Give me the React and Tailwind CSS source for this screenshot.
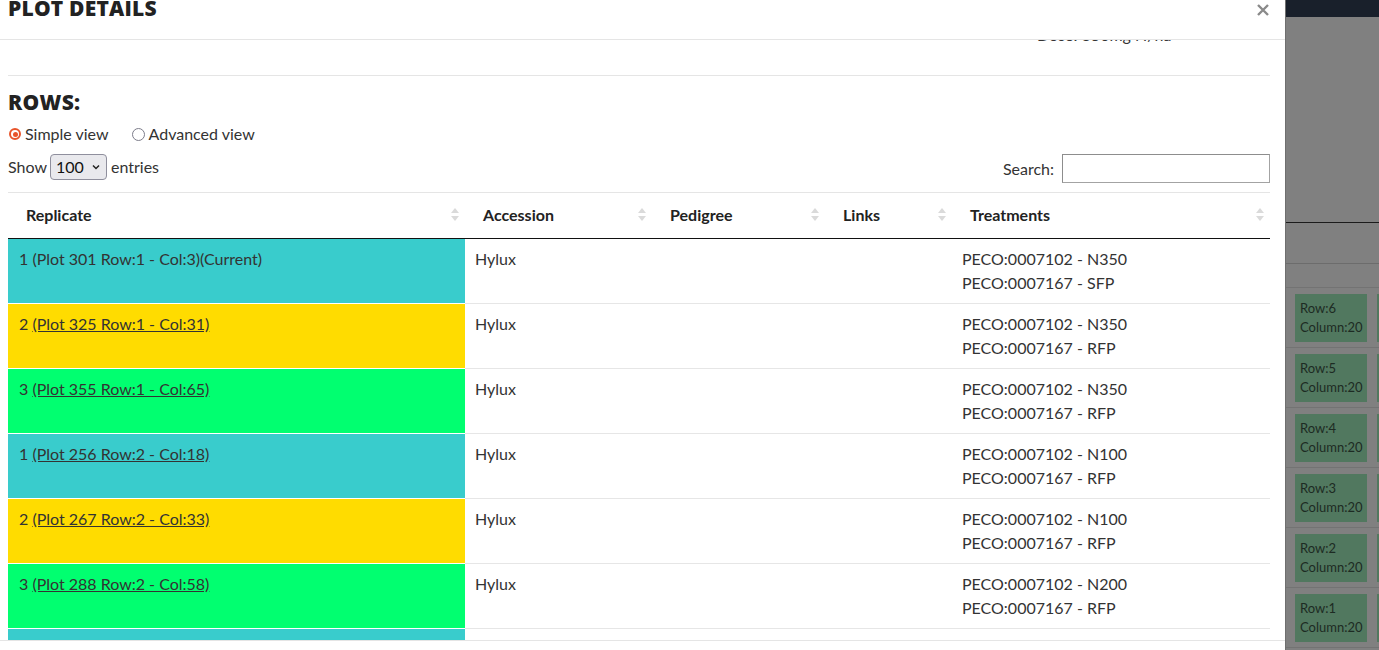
import React from 'react';

const rows = [
  { rep: '1', plot: '(Plot 301 Row:1 - Col:3)(Current)', link: false, color: 'bg-[#39cccc]', t1: 'PECO:0007102 - N350', t2: 'PECO:0007167 - SFP' },
  { rep: '2', plot: '(Plot 325 Row:1 - Col:31)', link: true, color: 'bg-[#ffdc00]', t1: 'PECO:0007102 - N350', t2: 'PECO:0007167 - RFP' },
  { rep: '3', plot: '(Plot 355 Row:1 - Col:65)', link: true, color: 'bg-[#01ff70]', t1: 'PECO:0007102 - N350', t2: 'PECO:0007167 - RFP' },
  { rep: '1', plot: '(Plot 256 Row:2 - Col:18)', link: true, color: 'bg-[#39cccc]', t1: 'PECO:0007102 - N100', t2: 'PECO:0007167 - RFP' },
  { rep: '2', plot: '(Plot 267 Row:2 - Col:33)', link: true, color: 'bg-[#ffdc00]', t1: 'PECO:0007102 - N100', t2: 'PECO:0007167 - RFP' },
  { rep: '3', plot: '(Plot 288 Row:2 - Col:58)', link: true, color: 'bg-[#01ff70]', t1: 'PECO:0007102 - N200', t2: 'PECO:0007167 - RFP' },
  { rep: '1', plot: '(Plot 230 Row:3 - Col:12)', link: true, color: 'bg-[#39cccc]', t1: 'PECO:0007102 - N200', t2: 'PECO:0007167 - RFP' },
];

const columns = [
  { label: 'Replicate', w: 'w-[457px]' },
  { label: 'Accession', w: 'w-[187px]' },
  { label: 'Pedigree', w: 'w-[173px]' },
  { label: 'Links', w: 'w-[127px]' },
  { label: 'Treatments', w: 'w-[318px]' },
];

const SortIcon = () => (
  <svg width="8" height="13" viewBox="0 0 8 13" className="shrink-0">
    <path d="M4 0 L8 5 L0 5 Z" fill="#dadada" />
    <path d="M0 8 L8 8 L4 13 Z" fill="#dadada" />
  </svg>
);

const bgCells = ['Row:6', 'Row:5', 'Row:4', 'Row:3', 'Row:2', 'Row:1'];

export default function App() {
  return (
    <div className="flex w-[1379px] h-[650px] overflow-hidden bg-[#808080] font-['Lato',sans-serif] text-[16px] text-[#333]">
      {/* modal */}
      <div className="w-[1285px] h-[650px] shrink-0 flex flex-col bg-white overflow-hidden">
        <div className="h-[40px] shrink-0 border-b border-[#e5e5e5] flex items-start justify-between pl-2 pr-[16px]">
          <h2 className="-mt-[2px] leading-[21px] text-[21px] font-extrabold tracking-[0.2px] text-[#222] font-['Open_Sans',sans-serif]">PLOT DETAILS</h2>
          <svg width="12" height="12" viewBox="0 0 12 12" className="mt-[4px]">
            <path d="M1 1 L11 11 M11 1 L1 11" stroke="#8a8a8a" strokeWidth="2.4" />
          </svg>
        </div>

        <div className="h-[600px] shrink-0 overflow-hidden pl-2 pr-[15px]">
          <div className="-mt-[17px]">
            <div className="h-6 leading-6 flex justify-end">
              <span className="w-[233px]">Dose: 350mg N/ha</span>
            </div>
            <div className="mt-[28px] border-t border-[#e5e5e5]" />
            <h3 className="mt-[16px] leading-[21px] text-[21px] font-extrabold tracking-[0.3px] text-[#222] font-['Open_Sans',sans-serif]">ROWS:</h3>

            <div className="mt-[9px] h-6 flex items-center">
              <span className="ml-[1px] w-[12px] h-[12px] rounded-full border-2 border-[#e8542b] flex items-center justify-center">
                <span className="w-[5px] h-[5px] rounded-full bg-[#e8542b]" />
              </span>
              <span className="ml-[4px]">Simple view</span>
              <span className="ml-[23px] w-[13px] h-[13px] rounded-full border-[1.5px] border-[#7c7c8a]" />
              <span className="ml-[4px]">Advanced view</span>
            </div>

            <div className="mt-[8px] h-[29px] flex items-start justify-between">
              <div className="flex items-center">
                <span>Show</span>
                <div className="ml-[3px] w-[57px] h-[26px] rounded-[4px] border border-[#8f8f9d] bg-[#e9e9ed] flex items-center justify-between pl-[5px] pr-[6px] text-[#111]">
                  <span>100</span>
                  <svg width="8" height="6" viewBox="0 0 8 6">
                    <path d="M1 1.5 L4 4.5 L7 1.5" stroke="#222" strokeWidth="1.5" fill="none" />
                  </svg>
                </div>
                <span className="ml-[4px]">entries</span>
              </div>
              <div className="flex items-center">
                <span>Search:</span>
                <div className="ml-[8px] w-[208px] h-[29px] border border-[#a3a3a3] border-t-[#8d8d8d] border-l-[#8d8d8d] bg-white" />
              </div>
            </div>

            <table className="mt-[9px] w-[1262px] table-fixed border-separate border-spacing-0">
              <thead>
                <tr>
                  {columns.map((c) => (
                    <th key={c.label} className={`${c.w} h-[47px] border-t border-b border-t-[#e5e5e5] border-b-[#111] p-0 font-bold text-[16px] text-left text-[#222]`}>
                      <div className="flex items-center justify-between pl-[18px] pr-[6px] pb-[2px]">
                        <span>{c.label}</span>
                        <SortIcon />
                      </div>
                    </th>
                  ))}
                </tr>
              </thead>
              <tbody>
                {rows.map((r, i) => {
                  const bt = i === 0 ? '' : 'border-t';
                  return (
                    <tr key={i}>
                      <td className={`${r.color} ${bt} border-white align-top pl-[11px] pr-[10px] pt-[8px] pb-[8px] leading-6`}>
                        {r.rep} {r.link ? <span className="underline">{r.plot}</span> : r.plot}
                      </td>
                      <td className={`${bt} border-[#e6e6e6] align-top px-[10px] pt-[8px] pb-[8px] leading-6`}>Hylux</td>
                      <td className={`${bt} border-[#e6e6e6] align-top px-[10px] pt-[8px] pb-[8px] leading-6`}></td>
                      <td className={`${bt} border-[#e6e6e6] align-top px-[10px] pt-[8px] pb-[8px] leading-6`}></td>
                      <td className={`${bt} border-[#e6e6e6] align-top px-[10px] pt-[8px] pb-[8px] leading-6`}>
                        <div>{r.t1}</div>
                        <div>{r.t2}</div>
                      </td>
                    </tr>
                  );
                })}
              </tbody>
            </table>
          </div>
        </div>

        <div className="h-[60px] shrink-0 border-t border-[#e5e5e5]" />
      </div>

      {/* dimmed page behind the modal */}
      <div className="flex-1 border-l border-[#6f6f6f] flex flex-col">
        <div className="h-[17px] shrink-0 bg-[#19202b] flex justify-end items-start">
          <div className="w-[9px] h-[6px] bg-[#7a7a7a] border-l border-b border-[#9a9a9a]" />
        </div>
        <div className="h-[206px] shrink-0 border-b border-[#1b1b1b]" />
        <div className="h-[41px] shrink-0 border-b border-[#6c6c6c]" />
        <div className="h-[24px] shrink-0 border-b border-[#737373]" />
        {bgCells.map((label) => (
          <div key={label} className="shrink-0 border-b border-[#737373] pt-[6px] pb-[5px] pl-[9px] flex gap-[10px]">
            <div className="w-[72px] h-[48px] shrink-0 bg-[#51785f] pl-[5px] pt-[5px] text-[13px] leading-[19px] text-[#1d2b23]">
              <div>{label}</div>
              <div>Column:20</div>
            </div>
            <div className="w-[72px] h-[48px] shrink-0 bg-[#51785f]" />
          </div>
        ))}
      </div>
    </div>
  );
}
